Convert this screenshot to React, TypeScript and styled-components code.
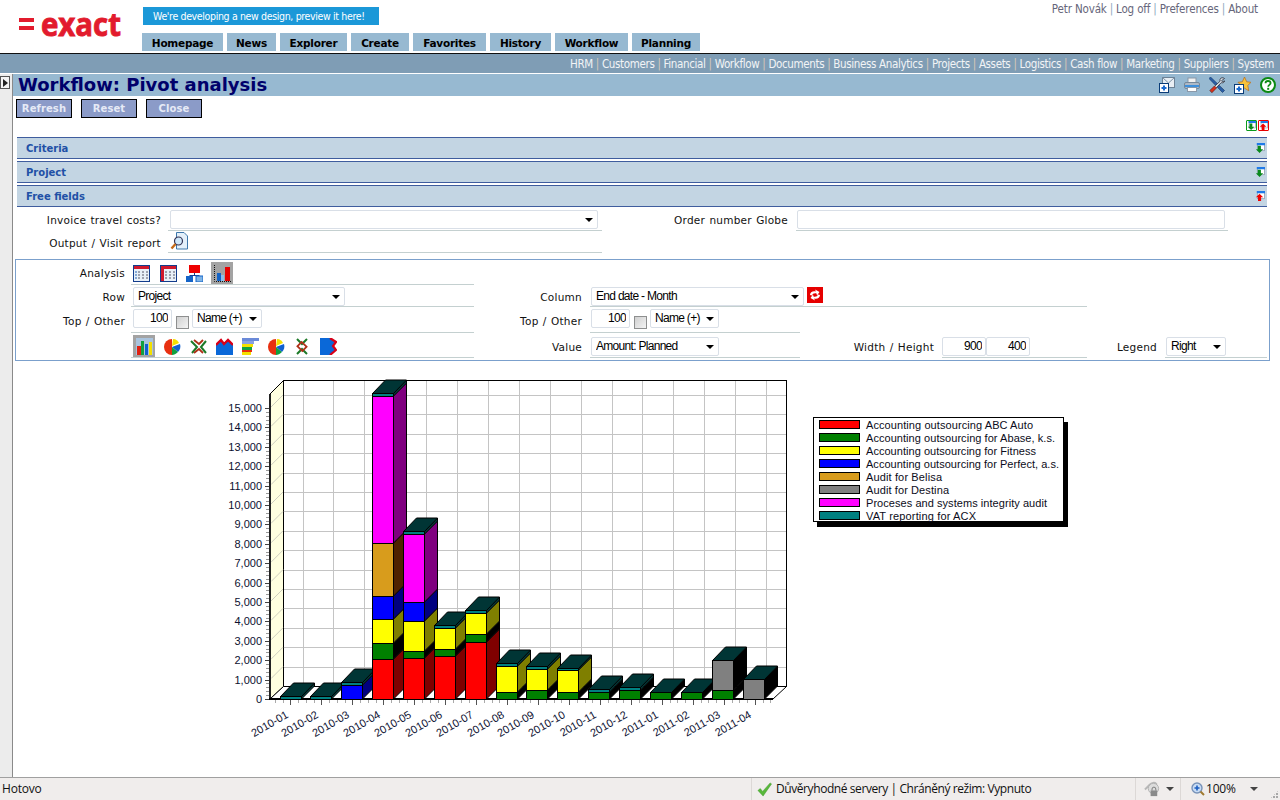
import React from 'react';
import styled, { createGlobalStyle } from 'styled-components';

const Global = createGlobalStyle`
  html, body { margin: 0; padding: 0; background: #fff; overflow: hidden; }
  * { box-sizing: border-box; }
`;

const NARROW = `"DejaVu Sans Condensed", "Open Sans", sans-serif`;

const Page = styled.div`
  width: 1280px; height: 800px; display: flex; flex-direction: column; overflow: hidden;
  font-family: "DejaVu Sans", Verdana, sans-serif; color: #000; background: #fff;
`;
const Header = styled.header`
  height: 54px; flex: none; display: flex; border-bottom: 1px solid #111; position: relative;
`;
const LogoBox = styled.svg`
  width: 124px; height: 36px; margin: 4px 0 0 19px; flex: none;
`;
const HeaderMiddle = styled.div`display: flex; flex-direction: column; align-items: flex-start; padding-top: 7px;`;
const Banner = styled.a`
  width: 236px; height: 18px; background: #1b98d8; color: #fff; font: 10.5px/18px ${NARROW}; letter-spacing: -0.35px; padding-left: 10px; white-space: nowrap;
`;
const Tabs = styled.nav`display: flex; gap: 4px; margin: 8px 0 0 -1px;`;
const Tab = styled.a<{ $w: number }>`
  width: ${p => p.$w}px; height: 18px; background: #97b9d1; font: bold 10.5px/20px "DejaVu Sans", sans-serif; letter-spacing: -0.25px; text-align: center; color: #000;
`;
const UserLinks = styled.div`
  margin-left: auto; padding: 2px 22px 0 0; font: 11.5px/15px ${NARROW}; letter-spacing: -0.15px; color: #66667a; white-space: nowrap;
`;
const Pipe = styled.span<{ $c: string }>`color: ${p => p.$c}; margin: 0 3px;`;
const NavBar = styled.nav`
  height: 20px; flex: none; background: #7f9db5; border-bottom: 1px solid #fff; text-align: right; padding-right: 6px;
  font: 11.5px/21px ${NARROW}; letter-spacing: -0.36px; color: #f2f4f6; white-space: nowrap;
`;
const Body = styled.div`flex: 1; display: flex; min-height: 0;`;
const SideStrip = styled.aside`
  width: 13px; flex: none; background: #ececec; border-right: 1px solid #8a8a8a; padding-top: 2px;
`;
const ExpandButton = styled.div`
  width: 10px; height: 13px; background: #f4f4f4; border: 1px solid #555; display: flex; align-items: center; justify-content: center;
  &::before { content: ''; border-left: 5px solid #222; border-top: 4px solid transparent; border-bottom: 4px solid transparent; }
`;
const Main = styled.main`flex: 1; display: flex; flex-direction: column; min-width: 0;`;
const TitleBar = styled.div`
  height: 22px; background: #97b9d1; display: flex; align-items: center; padding: 0 4px 0 5px;
`;
const Title = styled.h1`
  margin: 0; font: bold 18px/22px "DejaVu Sans", sans-serif; color: #00006b; flex: 1;
`;
const TitleIcons = styled.div`display: flex; gap: 9px; align-items: center;`;
const Ico = styled.svg<{ $s?: number }>`
  width: ${p => p.$s ?? 16}px; height: ${p => p.$s ?? 16}px; flex: none; display: block;
`;
const ButtonRow = styled.div`display: flex; gap: 9px; padding: 3px 0 0 3px;`;
const Btn = styled.button`
  width: 56px; height: 19px; padding: 0; background: #8b9bc8; border: 1px solid #000; color: #e6eaf6;
  font: bold 10px/16px "DejaVu Sans", sans-serif; letter-spacing: 0.1px;
`;
const ToggleRow = styled.div`display: flex; justify-content: flex-end; height: 19px; padding: 2px 11px 0 0; gap: 1px;`;
const Toggle = styled.div<{ $c: string }>`
  width: 11px; height: 11px; border: 1px solid ${p => p.$c}; border-radius: 1px; display: flex; align-items: center; justify-content: center;
`;
const Sections = styled.div`display: flex; flex-direction: column; gap: 2px; margin-left: 4px; width: 1250px;`;
const SectionBar = styled.div`
  height: 22px; background: #c3d5e3; border-top: 1px solid #3f5d9e; border-bottom: 1px solid #3f5d9e;
  display: flex; align-items: center; justify-content: space-between; padding: 0 2px 0 9px;
  font: bold 10px/22px "DejaVu Sans", sans-serif; color: #2150a6;
`;
const SectionName = styled.span`padding-top: 2px;`;
const TopForm = styled.div`
  display: grid; grid-template-columns: 151px 434px 194px 432px; grid-template-rows: 24px 22px; margin-left: 4px;
`;
const Label = styled.div<{ $pr?: number; $pt?: number }>`
  display: flex; align-items: center; justify-content: flex-end; padding: ${p => p.$pt ?? 2}px ${p => p.$pr ?? 7}px 0 0;
  font: 10.5px/14px "DejaVu Sans", sans-serif; letter-spacing: 0.25px; word-spacing: 0.7px; white-space: nowrap; color: #111;
`;
const Cell = styled.div<{ $span?: number; $pt?: number; $pl?: number; $gap?: number }>`
  grid-column: span ${p => p.$span ?? 1}; display: flex; align-items: flex-start; gap: ${p => p.$gap ?? 0}px;
  padding: ${p => p.$pt ?? 2}px 0 0 ${p => p.$pl ?? 2}px; border-bottom: 1px solid #c4d0d0;
`;
const SelectWrap = styled.div<{ $w: number }>`
  position: relative; width: ${p => p.$w}px; height: 19px; flex: none;
  &::after { content: ''; position: absolute; right: 5px; top: 8px; border-top: 4px solid #000; border-left: 4px solid transparent; border-right: 4px solid transparent; pointer-events: none; }
`;
const Select = styled.select`
  appearance: none; display: block; width: 100%; height: 100%; background: #fff; border: 1px solid #d9dfe7; border-radius: 2px; padding: 0 0 1px 4px; margin: 0;
  font: 12px/14px "Liberation Sans", sans-serif; letter-spacing: -0.7px; color: #000; outline: 0;
`;
const Input = styled.input<{ $w: number }>`
  width: ${p => p.$w}px; height: 19px; flex: none; background: #fff; border: 1px solid #d9dfe7; border-radius: 2px; padding: 0 3px 1px 2px; margin: 0;
  font: 12px/16px "Liberation Sans", sans-serif; letter-spacing: -0.7px; text-align: right; color: #000; outline: 0;
`;
const Check = styled.input`
  appearance: none; width: 13px; height: 13px; margin: 7px 3px 0 4px; flex: none; border: 1px solid #8e8f8f; background: linear-gradient(135deg, #d0d0d0, #f4f4f4);
`;
const Panel = styled.div`
  margin: 6px 0 0 2px; width: 1255px; height: 102px; border: 1px solid #7ba0cc; display: grid;
  grid-template-columns: 115px 343px 116px 210px 142px 145px 78px 102px; grid-template-rows: 25px 22px 26px 25px;
`;
const Blank = styled.div<{ $span: number }>`grid-column: span ${p => p.$span};`;
const IconRow = styled.div`display: flex; align-items: center;`;
const IconSlot = styled.div<{ $w: number; $ml?: number }>`
  width: ${p => p.$w}px; height: 22px; margin-left: ${p => p.$ml ?? 0}px; display: flex; align-items: center;
`;
const ActiveSlot = styled.div`
  width: 22px; height: 22px; display: flex; align-items: center; justify-content: center; background: #a3a3a3;
`;
const ChartHolder = styled.div`margin: 14px 0 0 183px; flex: none;`;
const ChartSvg = styled.svg`width: 900px; height: 400px; display: block; font-family: "Liberation Sans", Arial, sans-serif;`;
const StatusBar = styled.footer`
  height: 23px; flex: none; background: #f0edec; border-top: 1px solid #a0a0a0; display: flex; align-items: center;
  font: 12px/20px "Open Sans", sans-serif; color: #111; position: relative; letter-spacing: -0.2px;
`;
const StatusCell = styled.div<{ $w: number; $line?: boolean; $pl?: number; $ls?: number; $gap?: number }>`
  width: ${p => p.$w}px; height: 100%; display: flex; align-items: center; gap: ${p => p.$gap ?? 5}px; flex: none; padding-left: ${p => p.$pl ?? 2}px;
  letter-spacing: ${p => p.$ls ?? -0.2}px;
  border-left: ${p => (p.$line ? '1px solid #dcd8d6' : '0')};
`;
const Caret = styled.span<{ $ml: number }>`
  margin-left: ${p => p.$ml}px; border-top: 4px solid #444; border-left: 4px solid transparent; border-right: 4px solid transparent;
`;
const Grip = styled.div`
  position: absolute; right: 1px; bottom: 1px; width: 9px; height: 9px;
  background: radial-gradient(circle at 1px 1px, #a8a8a8 1px, transparent 1px) 0 0 / 3px 3px;
  clip-path: polygon(100% 0, 100% 100%, 0 100%);
`;

/* ---------- icons ---------- */
const EnvelopeAdd = () => (
  <Ico viewBox="0 0 16 16">
    <rect x="3.5" y="0.5" width="12" height="10" fill="#e8eef4" stroke="#6d8296" />
    <path d="M3.5 .5 9.5 6l6-5.5" fill="none" stroke="#7d92a6" />
    <rect x="0.5" y="6.5" width="9" height="9" fill="#fff" stroke="#0a3c78" />
    <path d="M5 8.5v5M2.5 11h5" stroke="#1a6ad0" strokeWidth="2" />
  </Ico>
);
const Printer = () => (
  <Ico viewBox="0 0 16 16">
    <rect x="4" y="1" width="8" height="5" fill="#f0f0f0" stroke="#8a98a8" />
    <rect x="0.5" y="5.5" width="15" height="6" rx="1.5" fill="#aeb9c6" stroke="#76889a" />
    <rect x="1" y="8" width="14" height="2" fill="#3d8fdc" />
    <rect x="3.5" y="10.5" width="9" height="4" fill="#fff" stroke="#8a98a8" />
  </Ico>
);
const Tools = () => (
  <Ico viewBox="0 0 16 16">
    <path d="M0 1.500 1.500 0l14 13.500-2 2z" fill="#2a5fa8" stroke="#0d2f60" strokeWidth=".6" />
    <path d="M15.500 1.500c-1.600-1.200-3.700-1-4.400.6-.3.800-.2 1.500.1 2L1 13.500 2.800 15.500l9.400-9.800c1.300.5 3 0 3.500-1.800l-2.200.8-1-1z" fill="#d4dde6" stroke="#1c1c28" strokeWidth=".7" />
    <path d="M1 13.500l4.500-4.500L7.500 11 3 15.500z" fill="#d8301c" stroke="#7a1808" strokeWidth=".5" />
  </Ico>
);
const StarAdd = () => (
  <Ico $s={17} viewBox="0 0 17 17">
    <path d="M10.500 0l2.200 4.800 4.300.5-3.200 3.200 1 5.300-4.300-2.700-4.300 2.700 1-5.300L4 5.300l4.300-.5z" fill="#f7c23c" stroke="#b86a18" strokeWidth=".7" />
    <rect x="0.500" y="7.500" width="9" height="9" fill="#fff" stroke="#0a3c78" />
    <path d="M5 9.500v5M2.500 12h5" stroke="#1a6ad0" strokeWidth="2" />
  </Ico>
);
const Help = () => (
  <Ico viewBox="0 0 16 16">
    <circle cx="8" cy="8" r="7" fill="#fff" stroke="#0b8a12" strokeWidth="2" />
    <path d="M5.500 6.200C5.500 4.600 6.600 4 8 4s2.600.7 2.600 2.100c0 1.800-2.400 1.800-2.400 3.600" fill="none" stroke="#0b8a12" strokeWidth="1.800" />
    <rect x="7.200" y="10.800" width="2" height="2" fill="#0b8a12" />
  </Ico>
);
const FoldIcon = ({ up, s = 10 }: { up?: boolean; s?: number }) => (
  <Ico $s={s} viewBox="0 0 11 11">
    <rect x="2.500" y="0.500" width="8" height="8" fill="#fff" stroke="#7a8aa0" strokeWidth=".7" />
    <rect x="2" y="0" width="9" height="2.500" fill="#1f7ae8" />
    {up ? (
      <path d="M5 3l4 4H6.700V11H3.300V7H1z" fill="#f00000" />
    ) : (
      <path d="M3 3H6.500V7H9l-4 4-4-4H3z" fill="#0a8a1c" />
    )}
  </Ico>
);
const TableIcon = ({ side }: { side?: boolean }) => (
  <Ico $s={17} viewBox="0 0 17 17">
    <rect x="0.500" y="0.500" width="16" height="16" fill="#e8f0f8" stroke="#123c8c" />
    <rect x="1" y="1" width="15" height="3" fill="#d0182c" />
    {side && <rect x="1" y="1" width="3" height="15" fill="#d0182c" />}
    <path d="M5 7h2M9 7h2M13 7h2M5 10h2M9 10h2M13 10h2M5 13h2M9 13h2M13 13h2" stroke="#556" />
    {!side && <path d="M2 7h2M2 10h2M2 13h2" stroke="#2460b0" />}
  </Ico>
);
const TreeIcon = () => (
  <Ico $s={17} viewBox="0 0 17 17">
    <rect x="3" y="0" width="11" height="8" fill="#ee0000" />
    <path d="M8.500 8v2M3.500 10.500h10" stroke="#123c8c" />
    <rect x="0" y="11" width="7" height="6" fill="#1464c8" />
    <rect x="10" y="11" width="7" height="6" fill="#7fb4e6" stroke="#1464c8" />
  </Ico>
);
const BarsFrame = () => (
  <Ico $s={17} viewBox="0 0 17 17">
    <path d="M.500 0v16.500H17" fill="none" stroke="#111" strokeDasharray="1 1" />
    <rect x="3" y="8" width="4" height="8" fill="#1464c8" />
    <rect x="7" y="10" width="3" height="6" fill="#8cc0ea" />
    <rect x="11" y="2" width="5" height="14" fill="#e80000" />
  </Ico>
);
const ChartBars = () => (
  <Ico $s={17} viewBox="0 0 17 17">
    <rect x="0" y="0" width="17" height="17" fill="#a9c4de" />
    <rect x="1" y="8" width="4" height="9" fill="#e02010" />
    <rect x="5" y="3" width="3" height="14" fill="#10a040" />
    <rect x="9" y="6" width="3" height="11" fill="#1060d0" />
    <rect x="13" y="4" width="3" height="13" fill="#f4e000" />
  </Ico>
);
const ChartPie = () => (
  <Ico $s={17} viewBox="0 0 17 17">
    <path d="M8 1A8 8 0 1 0 8 17z" fill="#e83010" />
    <path d="M8 8 9 1c3 0 5 2 6 4z" fill="#f4e000" />
    <path d="M8 9l8-3c1 3 0 6-2 8z" fill="#1060d0" />
    <path d="M8 9l6 5c-2 2-4 3-6 3z" fill="#10a040" />
  </Ico>
);
const ChartNet = () => (
  <Ico $s={17} viewBox="0 0 17 17">
    <path d="M1 3 7 9l-5 6M16 3l-5 6 5 6" fill="none" stroke="#1c7a28" strokeWidth="2" />
    <path d="M4 2l5 4 4-4M4 15l5-4 4 4" fill="none" stroke="#b03018" strokeWidth="1.800" />
  </Ico>
);
const ChartArea = () => (
  <Ico $s={17} viewBox="0 0 17 17">
    <path d="M0 7 5 2l3 4 4-4 5 5v10H0z" fill="#0a68d8" />
    <path d="M0 7 5 2l3 4 4-4 5 5" fill="none" stroke="#d80018" strokeWidth="2.400" />
  </Ico>
);
const ChartHBars = () => (
  <Ico $s={17} viewBox="0 0 17 17">
    <rect x="0" y="0" width="17" height="3" fill="#6a8ad8" />
    <rect x="0" y="3" width="12" height="3" fill="#8aa0e0" />
    <rect x="0" y="6" width="11" height="3" fill="#f4e000" />
    <rect x="0" y="9" width="10" height="3" fill="#10a040" />
    <rect x="0" y="12" width="10" height="2" fill="#e83010" />
    <rect x="0" y="14" width="9" height="3" fill="#f4e000" />
  </Ico>
);
const ChartNet2 = () => (
  <Ico $s={17} viewBox="0 0 17 17">
    <path d="M3 1 8 6l5-5M3 16l5-5 5 5" fill="none" stroke="#1c7a28" strokeWidth="2" />
    <rect x="4.500" y="5.500" width="7" height="6" transform="rotate(45 8 8.500)" fill="none" stroke="#b03018" strokeWidth="1.800" />
  </Ico>
);
const ChartFunnel = () => (
  <Ico $s={17} viewBox="0 0 17 17">
    <path d="M0 0h10l6 4-3 4 3 4-6 5H0z" fill="#0a68d8" />
    <path d="M10 0l6 4-3 4 3 4-6 5" fill="none" stroke="#d80018" strokeWidth="2.200" />
  </Ico>
);
const DocSearch = () => (
  <Ico $s={18} viewBox="0 0 18 18">
    <path d="M6.500.500H14l3.500 3.500v13H6.500z" fill="#e4f0fa" stroke="#3e78ac" />
    <circle cx="8.500" cy="9" r="4" fill="#cfe8fa" stroke="#335" strokeWidth="1.200" />
    <path d="M5.500 12 1.500 16.500" stroke="#c46a18" strokeWidth="2.400" />
  </Ico>
);
const RedRefresh = () => (
  <Ico viewBox="0 0 16 16">
    <rect width="16" height="16" fill="#e60000" />
    <path d="M3 8c0-3 3-4.500 6-3.500L8 2.500l4.500 2.500L10 8.500 9.500 6.500C7.500 6 5.500 6.500 5 8.500zM13 8c0 3-3 4.500-6 3.500l1 2-4.500-2.500L6 7.500l.5 2c2 .5 4 0 4.500-2z" fill="#fff" />
  </Ico>
);
const GreenCheck = () => (
  <Ico $s={15} viewBox="0 0 16 16">
    <path d="M1 9l2.500-2L6 10 14 1l1.500 1L6.500 15z" fill="#58b83a" stroke="#3d962a" strokeWidth=".5" />
  </Ico>
);
const GlobeLock = () => (
  <Ico $s={17} viewBox="0 0 18 18">
    <path d="M1 9l5-5c2-2 5-3 7-1v4" fill="none" stroke="#b8b8b8" strokeWidth="2" />
    <circle cx="10" cy="8" r="5.500" fill="#dcdcdc" stroke="#b0b0b0" />
    <rect x="7" y="10" width="7" height="6" fill="#8a8a8a" />
    <path d="M8.500 10V8.500a2 2 0 0 1 4 0V10" fill="none" stroke="#777" />
  </Ico>
);
const ZoomLens = () => (
  <Ico $s={14} viewBox="0 0 14 14">
    <circle cx="6" cy="6" r="5" fill="#c8dcf4" stroke="#7892b8" strokeWidth="1.400" />
    <path d="M6 3.500v5M3.500 6h5" stroke="#1a5cc0" strokeWidth="1.600" />
    <path d="M9.500 9.500 13 13" stroke="#a07a30" strokeWidth="2" />
  </Ico>
);

/* ---------- chart ---------- */
const C = { red: '#ff0000', green: '#008000', yellow: '#ffff00', blue: '#0000ff', orange: '#d89c1c', gray: '#808080', magenta: '#ff00ff', teal: '#008080' };
const SIDE: Record<string, string> = {
  [C.red]: '#7f0000', [C.green]: '#000000', [C.yellow]: '#7f7f00', [C.blue]: '#00007f', [C.orange]: '#4f2200', [C.gray]: '#000000', [C.magenta]: '#7f007f', [C.teal]: '#003a3a',
};
const BASE = 699;
const UNIT = 19.4;
const D = 13;
const W = 21;
type Seg = [string, number];
const BARS: { x: number; label: string; segs: Seg[] }[] = [
  { x: 280, label: '2010-01', segs: [[C.teal, 696]] },
  { x: 310, label: '2010-02', segs: [[C.teal, 696]] },
  { x: 341, label: '2010-03', segs: [[C.blue, 685], [C.teal, 682]] },
  { x: 372, label: '2010-04', segs: [[C.red, 659], [C.green, 643], [C.yellow, 619], [C.blue, 596], [C.orange, 543], [C.magenta, 396], [C.teal, 393]] },
  { x: 403, label: '2010-05', segs: [[C.red, 658], [C.green, 651], [C.yellow, 621], [C.blue, 602], [C.magenta, 534], [C.teal, 531]] },
  { x: 434, label: '2010-06', segs: [[C.red, 656], [C.green, 649], [C.yellow, 628], [C.teal, 625]] },
  { x: 465, label: '2010-07', segs: [[C.red, 642], [C.green, 634], [C.yellow, 613], [C.teal, 610]] },
  { x: 496, label: '2010-08', segs: [[C.green, 692], [C.yellow, 666], [C.teal, 663]] },
  { x: 526, label: '2010-09', segs: [[C.green, 690], [C.yellow, 669], [C.teal, 666]] },
  { x: 557, label: '2010-10', segs: [[C.green, 692], [C.yellow, 670], [C.teal, 668]] },
  { x: 588, label: '2010-11', segs: [[C.green, 692], [C.teal, 689]] },
  { x: 619, label: '2010-12', segs: [[C.green, 690], [C.teal, 687]] },
  { x: 650, label: '2011-01', segs: [[C.green, 692]] },
  { x: 681, label: '2011-02', segs: [[C.green, 692]] },
  { x: 712, label: '2011-03', segs: [[C.green, 690], [C.gray, 660]] },
  { x: 743, label: '2011-04', segs: [[C.gray, 679]] },
];
const LEGEND: [string, string, number][] = [
  [C.red, 'Accounting outsourcing ABC Auto', 167],
  [C.green, 'Accounting outsourcing for Abase, k.s.', 189],
  [C.yellow, 'Accounting outsourcing for Fitness', 170],
  [C.blue, 'Accounting outsourcing for Perfect, a.s.', 193],
  [C.orange, 'Audit for Belisa', 76],
  [C.gray, 'Audit for Destina', 83],
  [C.magenta, 'Proceses and systems integrity audit', 181],
  [C.teal, 'VAT reporting for ACX', 110],
];
const range = (n: number) => Array.from({ length: n }, (_, i) => i);
const VX = range(16).map(i => Math.round(302.5 + 30.9 * i) + 0.5);

const Chart = () => (
  <ChartSvg viewBox="196 375 900 400">
    <g shapeRendering="crispEdges">
      <rect x="283.5" y="380.5" width="503" height="306" fill="#fff" stroke="#000" />
      {VX.map(x => <line key={x} x1={x} x2={x} y1={381} y2={686} stroke="#c4c4c4" />)}
      {range(15).map(i => {
        const y = Math.round(686 - UNIT * (i + 1)) + 0.5;
        return <line key={i} x1={284} x2={786} y1={y} y2={y} stroke="#c4c4c4" />;
      })}
    </g>
    <polygon points="270,394 283.500,380.500 283.500,686.500 270,699" fill="#ffffe0" stroke="#000" strokeWidth="1" />
    {range(15).map(i => {
      const y = 699 - UNIT * (i + 1);
      return <line key={i} x1={271} x2={283} y1={y - 1} y2={y - 13} stroke="#cfcfc0" />;
    })}
    <polygon points="270,699 283.500,686.500 786.500,686.500 773,699" fill="#fff" stroke="#000" />
    <g shapeRendering="crispEdges">
      <rect x="269" y="394" width="2" height="306" fill="#222" />
      <rect x="269" y="698" width="504" height="2" fill="#000" />
      {range(76).map(i => {
        const y = Math.round(699 - (UNIT / 5) * i);
        const major = i % 5 === 0;
        return <line key={i} x1={major ? 265 : 266} x2={269} y1={y + 0.5} y2={y + 0.5} stroke={major ? '#444' : '#999'} />;
      })}
      {range(65).map(i => {
        const x = Math.round(275 + 7.74 * i) + 0.5;
        const major = (i - 2) % 4 === 0;
        return <line key={i} x1={x} x2={x} y1={700} y2={major ? 705 : 703} stroke={major ? '#555' : '#aaa'} />;
      })}
    </g>
    {range(16).map(i => (
      <text key={i} x={262} y={703 - UNIT * i} textAnchor="end" fontSize="11" fill="#0c1030">
        {(i * 1000).toLocaleString('en-US')}
      </text>
    ))}
    <g shapeRendering="crispEdges" stroke="#000" strokeWidth="1">
      {BARS.map(b => {
        const x = b.x + 0.5;
        let bottom = BASE;
        const top = b.segs[b.segs.length - 1][1];
        return (
          <g key={b.label}>
            {b.segs.map(([c, t]) => {
              const bot = bottom;
              bottom = t;
              return (
                <g key={c}>
                  <polygon points={`${x + W},${bot} ${x + W},${t} ${x + W + D},${t - D} ${x + W + D},${bot - D}`} fill={SIDE[c]} shapeRendering="auto" />
                  <rect x={x} y={t + 0.5} width={W} height={bot - t} fill={c} />
                </g>
              );
            })}
            <polygon points={`${x},${top + 0.5} ${x + W},${top + 0.5} ${x + W + D},${top - D} ${x + D},${top - D}`} fill="#003535" shapeRendering="auto" />
          </g>
        );
      })}
    </g>
    {BARS.map(b => (
      <text key={b.label} transform={`translate(${b.x + 9},717) rotate(-30)`} textAnchor="end" fontSize="11" fill="#0c1030">
        {b.label}
      </text>
    ))}
    <g shapeRendering="crispEdges">
      <rect x="817" y="422" width="251" height="105" fill="#000" />
      <rect x="813.500" y="417.500" width="250" height="104" fill="#fff" stroke="#000" />
      {LEGEND.map(([c, t, w], i) => (
        <g key={t}>
          <rect x="819.500" y={420.5 + 13 * i} width="40" height="8" fill={c} stroke="#000" />
          <text x="866" y={429 + 13 * i} fontSize="11" textLength={w} lengthAdjust="spacing" fill="#0c0c20" shapeRendering="auto">{t}</text>
        </g>
      ))}
    </g>
  </ChartSvg>
);

const NAV = ['HRM', 'Customers', 'Financial', 'Workflow', 'Documents', 'Business Analytics', 'Projects', 'Assets', 'Logistics', 'Cash flow', 'Marketing', 'Suppliers', 'System'];
const TABS: [string, number][] = [['Homepage', 81], ['News', 49], ['Explorer', 67], ['Create', 58], ['Favorites', 73], ['History', 61], ['Workflow', 73], ['Planning', 68]];

const Sel = ({ w, v }: { w: number; v: string }) => (
  <SelectWrap $w={w}>
    <Select defaultValue={v}><option>{v}</option></Select>
  </SelectWrap>
);

export default function App() {
  return (
    <Page>
      <Global />
      <Header>
        <LogoBox viewBox="0 0 124 36">
          <rect x="0" y="14" width="15" height="4" fill="#e21b2d" />
          <rect x="0" y="22" width="15" height="4" fill="#e21b2d" />
          <text x="22" y="32" fontFamily="Open Sans, sans-serif" fontWeight="700" fontSize="32" textLength="80" lengthAdjust="spacingAndGlyphs" fill="#e21b2d" stroke="#e21b2d" strokeWidth="0.9">exact</text>
        </LogoBox>
        <HeaderMiddle>
          <Banner>We're developing a new design, preview it here!</Banner>
          <Tabs>{TABS.map(([t, w]) => <Tab key={t} $w={w}>{t}</Tab>)}</Tabs>
        </HeaderMiddle>
        <UserLinks>
          Petr Novák<Pipe $c="#8fa9c0">|</Pipe>Log off<Pipe $c="#8fa9c0">|</Pipe>Preferences<Pipe $c="#8fa9c0">|</Pipe>About
        </UserLinks>
      </Header>
      <NavBar>
        {NAV.map((n, i) => (
          <React.Fragment key={n}>
            {i > 0 && <Pipe $c="#d8c8b8">|</Pipe>}
            {n}
          </React.Fragment>
        ))}
      </NavBar>
      <Body>
        <SideStrip><ExpandButton /></SideStrip>
        <Main>
          <TitleBar>
            <Title>Workflow: Pivot analysis</Title>
            <TitleIcons><EnvelopeAdd /><Printer /><Tools /><StarAdd /><Help /></TitleIcons>
          </TitleBar>
          <ButtonRow>
            <Btn>Refresh</Btn><Btn>Reset</Btn><Btn>Close</Btn>
          </ButtonRow>
          <ToggleRow>
            <Toggle $c="#0a9a1c"><FoldIcon s={9} /></Toggle>
            <Toggle $c="#e80000"><FoldIcon up s={9} /></Toggle>
          </ToggleRow>
          <Sections>
            <SectionBar><SectionName>Criteria</SectionName><FoldIcon /></SectionBar>
            <SectionBar><SectionName>Project</SectionName><FoldIcon /></SectionBar>
            <SectionBar><SectionName>Free fields</SectionName><FoldIcon up /></SectionBar>
          </Sections>
          <TopForm>
            <Label>Invoice travel costs?</Label>
            <Cell $pt={3}><Sel w={428} v="" /></Cell>
            <Label $pr={8}>Order number Globe</Label>
            <Cell $pt={3} $pl={1}><Input $w={428} /></Cell>
            <Label>Output / Visit report</Label>
            <Cell $pl={2} $pt={1}><DocSearch /></Cell>
          </TopForm>
          <Panel>
            <Label $pr={6} $pt={0}>Analysis</Label>
            <Cell $pl={2}>
              <IconRow>
                <IconSlot $w={27}><TableIcon /></IconSlot>
                <IconSlot $w={26}><TableIcon side /></IconSlot>
                <IconSlot $w={25}><TreeIcon /></IconSlot>
                <ActiveSlot><BarsFrame /></ActiveSlot>
              </IconRow>
            </Cell>
            <Blank $span={6} />

            <Label $pr={6}>Row</Label>
            <Cell><Sel w={212} v="Project" /></Cell>
            <Label $pr={8}>Column</Label>
            <Cell $span={3} $pl={1} $gap={3}><Sel w={213} v="End date - Month" /><RedRefresh /></Cell>
            <Blank $span={2} />

            <Label $pr={6}>Top / Other</Label>
            <Cell><Input $w={39} defaultValue="100" /><Check type="checkbox" /><Sel w={70} v="Name (+)" /></Cell>
            <Label $pr={8}>Top / Other</Label>
            <Cell $pl={1}><Input $w={39} defaultValue="100" /><Check type="checkbox" /><Sel w={69} v="Name (+)" /></Cell>
            <Blank $span={4} />

            <div />
            <Cell>
              <IconRow>
                <ActiveSlot><ChartBars /></ActiveSlot>
                <IconSlot $w={26} $ml={9}><ChartPie /></IconSlot>
                <IconSlot $w={26}><ChartNet /></IconSlot>
                <IconSlot $w={26}><ChartArea /></IconSlot>
                <IconSlot $w={26}><ChartHBars /></IconSlot>
                <IconSlot $w={26}><ChartPie /></IconSlot>
                <IconSlot $w={26}><ChartNet2 /></IconSlot>
                <IconSlot $w={26}><ChartFunnel /></IconSlot>
              </IconRow>
            </Cell>
            <Label $pr={8}>Value</Label>
            <Cell $pt={4} $pl={1}><Sel w={128} v="Amount: Planned" /></Cell>
            <Label $pr={8}>Width / Height</Label>
            <Cell $pt={4} $pl={0}><Input $w={44} defaultValue="900" /><Input $w={44} defaultValue="400" /></Cell>
            <Label $pr={8}>Legend</Label>
            <Cell $pt={4} $pl={1}><Sel w={60} v="Right" /></Cell>
          </Panel>
          <ChartHolder><Chart /></ChartHolder>
        </Main>
      </Body>
      <StatusBar>
        <StatusCell $w={751}>Hotovo</StatusCell>
        <StatusCell $w={384} $line $pl={5} $ls={-0.42} $gap={4}><GreenCheck />Důvěryhodné servery | Chráněný režim: Vypnuto</StatusCell>
        <StatusCell $w={45} $line $pl={8} $gap={0}><GlobeLock /><Caret $ml={5} /></StatusCell>
        <StatusCell $w={100} $line $pl={10} $gap={1}><ZoomLens />100%<Caret $ml={13} /></StatusCell>
        <Grip />
      </StatusBar>
    </Page>
  );
}
